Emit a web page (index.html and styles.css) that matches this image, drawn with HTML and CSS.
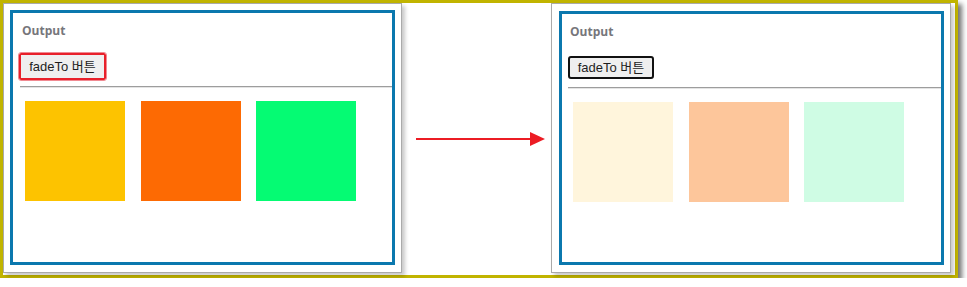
FILE: index.html
```html
<!DOCTYPE html>
<html lang="ko">
  <head>
    <meta charset="utf-8" />
    <title>fadeTo</title>
    <link rel="stylesheet" href="styles.css">
  </head>
  <body>
    <div class="frame">
      <div class="panel">
        <div class="output">
          <div class="content">
            <div class="label">Output</div>
            <div class="btnRow">
              <button class="btn focused">fadeTo 버튼</button>
            </div>
            <hr class="rule" />
            <div class="boxes">
              <div class="box yellow"></div>
              <div class="box orange"></div>
              <div class="box green"></div>
            </div>
          </div>
        </div>
      </div>

      <div class="arrow">
        <svg width="149" height="20" viewBox="0 0 149 20">
          <line x1="14" y1="10" x2="131" y2="10" stroke="#ec1c24" stroke-width="2" />
          <polygon points="128,3 143,10 128,17" fill="#ec1c24" />
        </svg>
      </div>

      <div class="panel wide">
        <div class="output after">
          <div class="content">
            <div class="label">Output</div>
            <div class="btnRow">
              <button class="btn">fadeTo 버튼</button>
            </div>
            <hr class="rule" />
            <div class="boxes">
              <div class="box yellow faded"></div>
              <div class="box orange faded"></div>
              <div class="box green faded"></div>
            </div>
          </div>
        </div>
      </div>
    </div>
  </body>
</html>
```

FILE: styles.css
```css
body {
  margin: 0px;
  background-color: #ffffff;
  font-family: "Open Sans", "Noto Sans", sans-serif;
}

.frame {
  box-sizing: border-box;
  width: 958px;
  height: 278px;
  border: 3px solid #c1b400;
  background-color: #ffffff;
  box-shadow: 4px 4px 5px rgba(0, 0, 0, 0.55);
  display: flex;
  align-items: flex-start;
}

.panel {
  box-sizing: border-box;
  width: 399px;
  height: 270px;
  border: 1px solid #aaaaaa;
  padding: 6px 6px 7px 6px;
  background-color: #ffffff;
  box-shadow: 3px 3px 4px rgba(0, 0, 0, 0.22);
}

.panel.wide {
  width: 400px;
  padding-left: 7px;
}

.output {
  box-sizing: border-box;
  width: 385px;
  height: 255px;
  border: 3px solid #0b78ae;
}

.output.after {
  height: 254px;
  margin-top: 1px;
}

.content {
  padding-left: 7px;
}

.after .content {
  padding-left: 6px;
}

.label {
  margin-top: 10px;
  padding-left: 2px;
  line-height: 16px;
  font-size: 12px;
  font-weight: 700;
  color: #76767b;
}

.btnRow {
  margin-top: 11px;
  height: 32px;
  display: flex;
  align-items: center;
}

.btn {
  box-sizing: border-box;
  width: 86px;
  height: 23px;
  padding: 0px;
  border: 2px solid #111111;
  border-radius: 3px;
  background-color: #efefef;
  color: #1e1e1e;
  font-family: "Liberation Sans", "Noto Sans CJK KR", sans-serif;
  font-size: 13px;
  line-height: 17px;
  text-align: center;
}

.btn.focused {
  margin-left: -1px;
  width: 87px;
  height: 27px;
  border: 2px solid #e8202a;
  border-radius: 2px;
  outline: 1px solid #f08a92;
}

.rule {
  margin: 4px 0px 0px 0px;
  height: 0px;
  border: 0px;
  border-top: 1px solid #9d9d9d;
  border-bottom: 1px solid #e4e4e4;
}

.boxes {
  margin-top: 13px;
  margin-left: 5px;
  display: flex;
}

.box {
  width: 100px;
  height: 100px;
}

.box + .box {
  margin-left: 16px;
}

.box.green {
  margin-left: 15px;
}

.yellow { background-color: #fdc300; }
.orange { background-color: #fd6a03; }
.green { background-color: #05fb73; }

.yellow.faded { background-color: #fff5dc; }
.orange.faded { background-color: #fdc69b; }
.green.faded { background-color: #cffce4; }

.arrow {
  width: 149px;
  height: 20px;
  align-self: center;
  flex-shrink: 0;
}

.arrow svg {
  display: block;
}
```
